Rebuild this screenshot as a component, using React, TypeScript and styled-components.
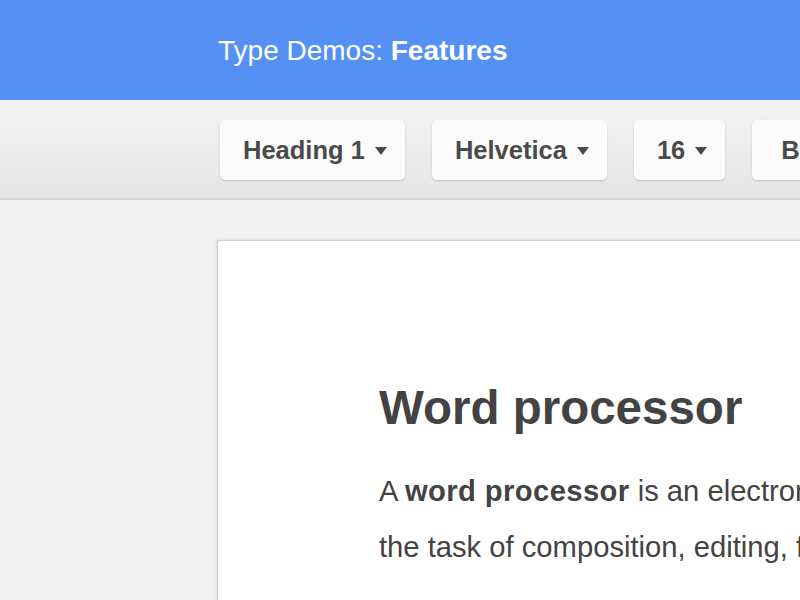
import styled, { createGlobalStyle } from "styled-components";

const GlobalStyle = createGlobalStyle`
  html, body {
    margin: 0;
    padding: 0;
    background: #f1f1f1;
    overflow: hidden;
  }
  body {
    font-family: "Liberation Sans", Arial, Helvetica, sans-serif;
  }
`;

export const Screen = styled.div`
  width: 800px;
  height: 600px;
  overflow: hidden;
  display: flex;
  flex-direction: column;
  background: #f1f1f1;
`;

export const TopBar = styled.header`
  height: 100px;
  flex-shrink: 0;
  background: #5591f5;
  display: flex;
  align-items: center;
  padding-left: 218px;
  box-sizing: border-box;
`;

export const Title = styled.h1`
  margin: 2px 0 0;
  font-size: 28px;
  font-weight: 400;
  color: #ffffff;
  white-space: nowrap;

  b {
    font-weight: 700;
  }
`;

export const Toolbar = styled.div`
  height: 100px;
  flex-shrink: 0;
  box-sizing: border-box;
  background: linear-gradient(#f3f3f3, #e6e6e6);
  border-bottom: 2px solid #d6d6d6;
  display: flex;
  align-items: flex-start;
  gap: 27px;
  padding: 20px 0 0 220px;
`;

export const Dropdown = styled.button<{ $plain?: boolean }>`
  height: 60px;
  flex-shrink: 0;
  display: flex;
  align-items: center;
  gap: 10px;
  padding: ${(p) => (p.$plain ? "0 29px" : "0 18px 0 23px")};
  border: none;
  border-radius: 5px;
  background: #fbfbfb;
  box-shadow: 0 1px 2px rgba(0, 0, 0, 0.18);
  font-family: "Liberation Sans", Arial, sans-serif;
  font-size: 25.5px;
  font-weight: 700;
  color: #4a4a4a;
  white-space: nowrap;
`;

export const Caret = styled.span`
  width: 0;
  height: 0;
  border-left: 6px solid transparent;
  border-right: 6px solid transparent;
  border-top: 8px solid #4a4a4a;
  margin-top: 2px;
`;

export const Workspace = styled.main`
  flex: 1;
  padding: 40px 0 0 217px;
  min-height: 0;
`;

export const Sheet = styled.article`
  width: 760px;
  height: 520px;
  box-sizing: border-box;
  background: #ffffff;
  border: 1px solid #cfcfcf;
  box-shadow: 0 0 4px rgba(0, 0, 0, 0.12);
  padding: 139px 0 0 161px;
  color: #434343;
`;

export const Heading = styled.h2`
  margin: 0 0 27px;
  font-size: 47.5px;
  line-height: 56px;
  font-weight: 700;
  white-space: nowrap;
`;

export const Paragraph = styled.p`
  margin: 0;
  font-size: 29.2px;
  line-height: 56px;
  white-space: nowrap;

  b {
    font-weight: 700;
    letter-spacing: 0.4px;
  }
`;

const fields = ["Heading 1", "Helvetica", "16"];

const App = () => {
  return (
    <Screen>
      <GlobalStyle />
      <TopBar>
        <Title>
          Type Demos: <b>Features</b>
        </Title>
      </TopBar>
      <Toolbar>
        {fields.map((label) => (
          <Dropdown key={label}>
            {label}
            <Caret />
          </Dropdown>
        ))}
        <Dropdown $plain>B</Dropdown>
      </Toolbar>
      <Workspace>
        <Sheet>
          <Heading>Word processor</Heading>
          <Paragraph>
            A <b>word processor</b> is an electronic device or computer software
            application that performs
            <br />
            the task of composition, editing, formatting, and printing of
            documents.
          </Paragraph>
        </Sheet>
      </Workspace>
    </Screen>
  );
};

export default App;
